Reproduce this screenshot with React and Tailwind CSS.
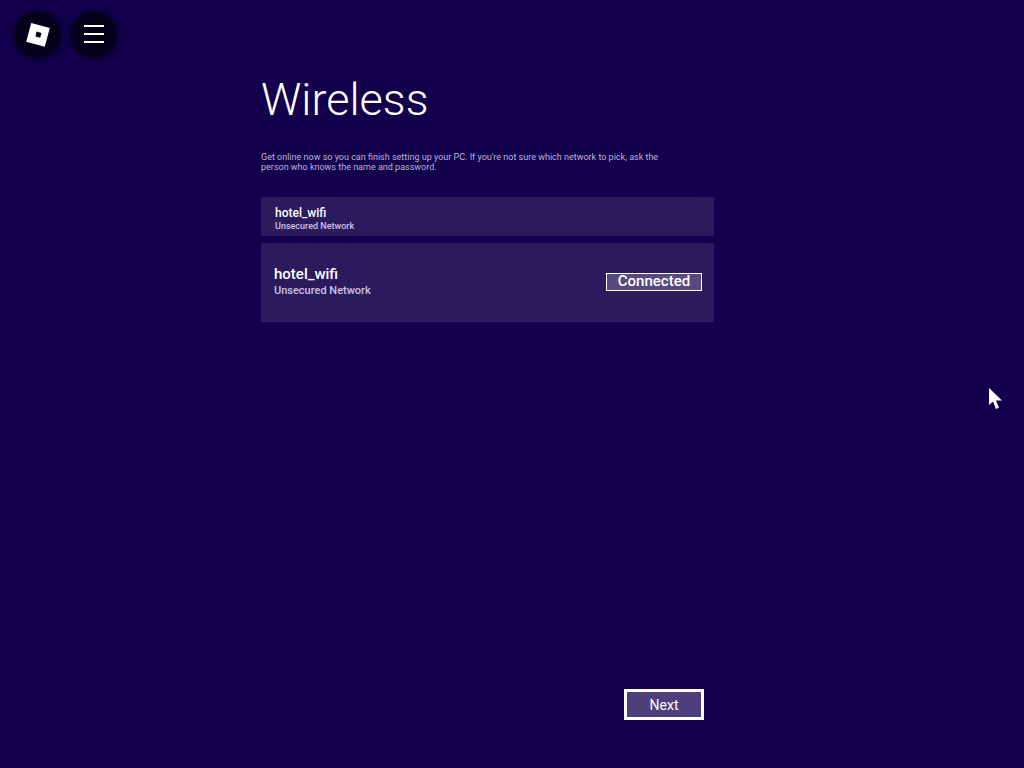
const NETWORKS_FONT = "font-['Roboto',sans-serif]";

function RobloxLogo() {
  return (
    <svg width="26" height="26" viewBox="0 0 26 26">
      <path
        fillRule="evenodd"
        fill="#ffffff"
        d="M6.2 1 L24.8 6 L19.8 24.8 L1.2 19.8 Z M11.6 9.6 L10.4 14.4 L15.2 15.7 L16.5 10.9 Z"
      />
    </svg>
  );
}

function Cursor() {
  return (
    <svg width="16" height="24" viewBox="0 0 16 24" className="absolute left-[988px] top-[387px]">
      <path fill="#ffffff" d="M1 1 L1 18 L5 14.5 L8 22 L11 20.8 L8 13.5 L14 13.5 Z" />
    </svg>
  );
}

function CircleButton({ children }) {
  return (
    <div className="flex h-[44px] w-[44px] items-center justify-center rounded-full bg-[#03001a] shadow-[0_0_5px_2px_#03001a]">
      {children}
    </div>
  );
}

export default function App() {
  return (
    <div className={`relative h-[768px] w-[1024px] overflow-hidden bg-[#12004d] ${NETWORKS_FONT}`}>
      <header className="flex gap-3 pl-[16px] pt-[13px]">
        <CircleButton>
          <RobloxLogo />
        </CircleButton>
        <CircleButton>
          <div className="mb-[3px] flex w-[20px] flex-col gap-[6px]">
            <div className="h-[2px] bg-white" />
            <div className="h-[2px] bg-white" />
            <div className="h-[2px] bg-white" />
          </div>
        </CircleButton>
      </header>

      <main className="ml-[261px] w-[453px] pt-[15px]">
        <h1 className="text-[45px] leading-[56px] font-light text-white">Wireless</h1>
        <p className="mt-[24px] w-[410px] text-[9px] leading-[10px] text-[#bdb4da]">
          Get online now so you can finish setting up your PC. If you're not sure which network to pick, ask the person
          who knows the name and password.
        </p>

        <div className="mt-[25px] flex h-[39px] flex-col justify-center rounded-[1px] bg-[#2a1a5e] pl-[14px] pt-[5px]">
          <div className="-mt-[1px] text-[12px] leading-[14px] font-medium text-white">hotel_wifi</div>
          <div className="mt-[1px] text-[9px] leading-[11px] font-medium text-[#cbc3e4]">Unsecured Network</div>
        </div>

        <div className="mt-[7px] flex h-[79px] items-center justify-between rounded-[1px] bg-[#2a1a5e] pl-[13px] pr-[12px]">
          <div className="mb-[3px]">
            <div className="text-[15px] leading-[18px] font-medium text-white">hotel_wifi</div>
            <div className="text-[11px] leading-[15px] font-medium text-[#cbc3e4]">Unsecured Network</div>
          </div>
          <div className="mb-[2px] flex h-[18px] w-[96px] items-center justify-center border border-white bg-[#564a80] text-[15px] font-medium text-white">
            Connected
          </div>
        </div>
      </main>

      <div className="absolute left-[624px] top-[689px] flex h-[31px] w-[80px] items-center justify-center border-[3px] border-white bg-[#4d3f7c] pt-[1px] text-[14px] text-white">
        Next
      </div>

      <Cursor />
    </div>
  );
}
